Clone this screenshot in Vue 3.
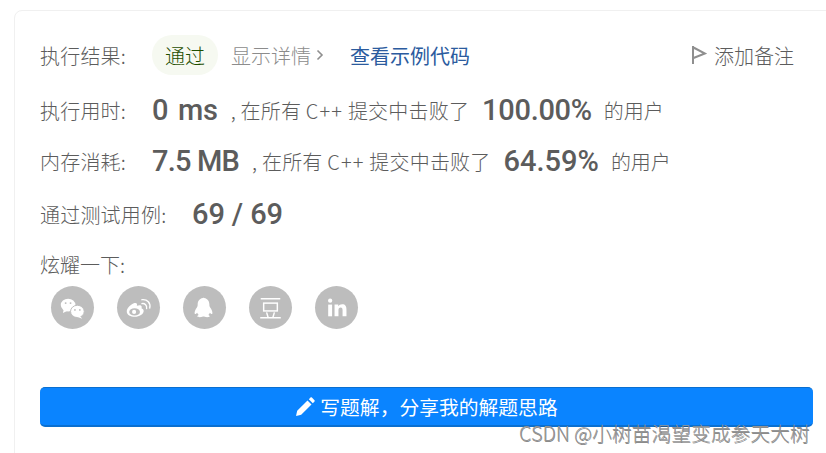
<template>
  <div class="page">
    <section class="card">
      <div class="row result-row">
        <span class="label">执行结果:</span>
        <span class="status">通过</span>
        <a class="details">显示详情
          <svg class="chev" width="8" height="12" viewBox="0 0 8 12"><path d="M1.500 1.500 6 6l-4.500 4.500" fill="none" stroke="#8f8f8f" stroke-width="1.600" /></svg>
        </a>
        <a class="sample">查看示例代码</a>
        <a class="note">
          <svg width="16" height="20" viewBox="0 0 16 20"><path d="M2 1v18M2.500 2.500 14 8.500 2.500 13" fill="none" stroke="#8f8f8f" stroke-width="2" /></svg>
          <span>添加备注</span>
        </a>
      </div>

      <div v-for="s in stats" :key="s.label" class="row stat-row">
        <span class="label">{{ s.label }}</span>
        <strong class="num main">{{ s.value }}</strong>
        <span class="sep">, 在所有 <span class="lang">C++</span> 提交中击败了</span>
        <strong class="num pct">{{ s.pct }}</strong>
        <span class="tail">的用户</span>
      </div>

      <div class="row case-row">
        <span class="label">通过测试用例:</span>
        <strong class="num cases">69 / 69</strong>
      </div>

      <div class="share">
        <div class="share-title">炫耀一下:</div>
        <div class="icons">
          <span class="icon">
            <svg viewBox="0 0 44 44" width="44" height="44">
              <ellipse cx="17.500" cy="19" rx="7.500" ry="6.500" fill="#fff" />
              <path d="M13 23.500l-.8 3.500 4.300-2z" fill="#fff" />
              <ellipse cx="27" cy="25.500" rx="7" ry="6.300" fill="#fff" stroke="#bdbdbd" stroke-width="1" />
              <path d="M29.500 30l2.500 3-5.500-2z" fill="#fff" />
              <circle cx="15" cy="17" r="1" fill="#bdbdbd" /><circle cx="20" cy="17" r="1" fill="#bdbdbd" />
              <circle cx="24.500" cy="24" r="0.900" fill="#bdbdbd" /><circle cx="29.500" cy="24" r="0.900" fill="#bdbdbd" />
            </svg>
          </span>
          <span class="icon">
            <svg viewBox="0 0 44 44" width="44" height="44">
              <path d="M10 25.500c0-3.500 4.500-7.500 8-8.500 2-.5 3 .5 2.300 2.800 2.500-1 5-.8 5 1.200 0 .5-.1.900-.3 1.300 1.300.4 2.300 1.300 2.300 2.700 0 3-4.500 6-9 6-4.500 0-8.300-2-8.300-5.500z" fill="#fff" />
              <ellipse cx="18" cy="26" rx="5.500" ry="3.800" fill="#bdbdbd" />
              <circle cx="17.500" cy="26" r="2.100" fill="#fff" />
              <path d="M25.500 17.500c3-.6 5.500 2 4.800 5M25.500 13.500c5.500-.8 9.300 3.800 8 8.500" fill="none" stroke="#fff" stroke-width="1.400" stroke-linecap="round" />
            </svg>
          </span>
          <span class="icon">
            <svg viewBox="0 0 44 44" width="44" height="44">
              <path d="M22 11.500c-4.500 0-7 3-7 7 0 1.500-.2 2-.8 3-1.500 2-2.700 4.500-2.200 6.300.3 1 1.500 0 2.500-1 .4 1 .9 1.800 1.600 2.400-1 .4-1.600 1-1.400 1.500.4.8 3.500.8 5 .3 1-.3 1.600-.3 2.600 0 1.500.5 4.600.5 5-.3.200-.5-.4-1.100-1.400-1.500.7-.6 1.200-1.400 1.600-2.400 1 1 2.200 2 2.500 1 .5-1.800-.7-4.300-2.200-6.300-.6-1-.8-1.500-.8-3 0-4-2.500-7-7-7z" fill="#fff" />
            </svg>
          </span>
          <span class="icon">
            <svg viewBox="0 0 44 44" width="44" height="44">
              <path d="M12 12.500h20M11.500 32h21" stroke="#fff" stroke-width="1.500" fill="none" />
              <rect x="15" y="17" width="14" height="8" fill="none" stroke="#fff" stroke-width="1.500" />
              <path d="M18 26.500l1.500 5M26 26.500l-1.500 5" stroke="#fff" stroke-width="1.500" fill="none" />
            </svg>
          </span>
          <span class="icon">
            <svg viewBox="0 0 44 44" width="44" height="44">
              <rect x="13.500" y="18.500" width="4" height="12" fill="#fff" />
              <circle cx="15.500" cy="14.500" r="2.200" fill="#fff" />
              <path d="M20 18.500h3.800v1.800c.8-1.300 2.200-2.100 4-2.100 3.300 0 4.400 2.100 4.400 5.400v6.900h-4v-6.200c0-1.600-.5-2.700-1.900-2.700-1.500 0-2.300 1.100-2.300 2.700v6.200h-4z" fill="#fff" />
            </svg>
          </span>
        </div>
      </div>

      <button class="write">
        <svg width="20" height="20" viewBox="0 0 20 20"><path d="M1 19l1.200-5.200L12.500 3.500l4 4L6.200 17.800zM13.800 2.200 15.500.6c.4-.4 1-.4 1.400 0l2.600 2.600c.4.4.4 1 0 1.400l-1.700 1.700z" fill="#fff" /></svg>
        <span>写题解，分享我的解题思路</span>
      </button>
    </section>
    <div class="watermark">CSDN @小树苗渴望变成参天大树</div>
  </div>
</template>

<script setup>
const stats = [
  { label: "执行用时:", value: "0 ms", pct: "100.00%" },
  { label: "内存消耗:", value: "7.5 MB", pct: "64.59%" },
];
</script>

<style>
html,
body {
  margin: 0;
  background: #fff;
  overflow: hidden;
}
</style>

<style scoped>
.page {
  position: relative;
  width: 826px;
  height: 453px;
  overflow: hidden;
  padding: 10px 0 0 14px;
  box-sizing: border-box;
  font-family: "Noto Sans CJK SC", "Noto Sans", sans-serif;
  font-weight: 300;
  font-size: 20px;
  color: #5c5c5c;
}
.card {
  width: 840px;
  height: 460px;
  box-sizing: border-box;
  border: 1px solid #f0f0f0;
  border-radius: 8px;
  padding: 24px 0 0 25px;
}
.row {
  display: flex;
  align-items: center;
  width: 773px;
  white-space: nowrap;
}
.label {
  width: 112px;
  flex: none;
  letter-spacing: 0.2px;
}
.result-row {
  height: 40px;
}
.status {
  background: #f6f9f1;
  color: #1f4f00;
  border-radius: 20px;
  width: 66px;
  height: 40px;
  line-height: 41px;
  text-align: center;
  flex: none;
}
.details {
  color: #8c8c8c;
  margin-left: 13px;
  display: flex;
  align-items: center;
  gap: 5px;
}
.sample {
  color: #2b5b9e;
  font-weight: 400;
  margin-left: 26px;
}
.note {
  margin-left: auto;
  margin-right: 19px;
  display: flex;
  align-items: center;
  gap: 7px;
}
.stat-row {
  height: 30px;
  margin-top: 20px;
}
.stat-row:nth-child(3) {
  margin-top: 21px;
}
.stat-row:nth-child(2) .main {
  word-spacing: 3px;
}
.stat-row:nth-child(3) .main {
  letter-spacing: -0.800px;
}
.stat-row:nth-child(3) .pct {
  letter-spacing: 0;
}
.num {
  font-family: Roboto, "Noto Sans", sans-serif;
  font-weight: 500;
  font-size: 29px;
  color: #5c5c5c;
  letter-spacing: -0.300px;
}
.sep {
  margin-left: 13px;
  font-size: 20px;
  letter-spacing: 0.200px;
}
.lang {
  letter-spacing: 1.200px;
}
.pct {
  margin-left: 13px;
}
.tail {
  margin-left: 12px;
  font-size: 20px;
}
.case-row {
  height: 30px;
  margin-top: 23px;
}
.cases {
  margin-left: 40px;
  letter-spacing: -0.100px;
}
.share {
  margin-top: 22px;
}
.share-title {
  line-height: 28px;
}
.icons {
  display: flex;
  gap: 23px;
  margin: 7px 0 0 11px;
}
.icon {
  width: 43px;
  height: 43px;
  border-radius: 50%;
  background: #bdbdbd;
  display: flex;
  align-items: center;
  justify-content: center;
}
.write {
  width: 773px;
  height: 40px;
  margin-top: 58px;
  display: flex;
  align-items: center;
  justify-content: center;
  gap: 5px;
  border: 0;
  border-bottom: 2px solid #0a6fd0;
  border-top: 1px solid #0a6fd0;
  border-radius: 5px;
  background: #0a84ff;
  color: #fff;
  font: inherit;
  font-weight: 400;
  font-size: 19.800px;
  padding: 0;
}
.watermark {
  position: absolute;
  left: 519px;
  top: 418px;
  font-size: 19.800px;
  font-weight: 300;
  color: #959595;
  white-space: nowrap;
  text-shadow: 0.500px 0.500px 0.500px rgba(60, 60, 60, 0.6);
}
</style>
